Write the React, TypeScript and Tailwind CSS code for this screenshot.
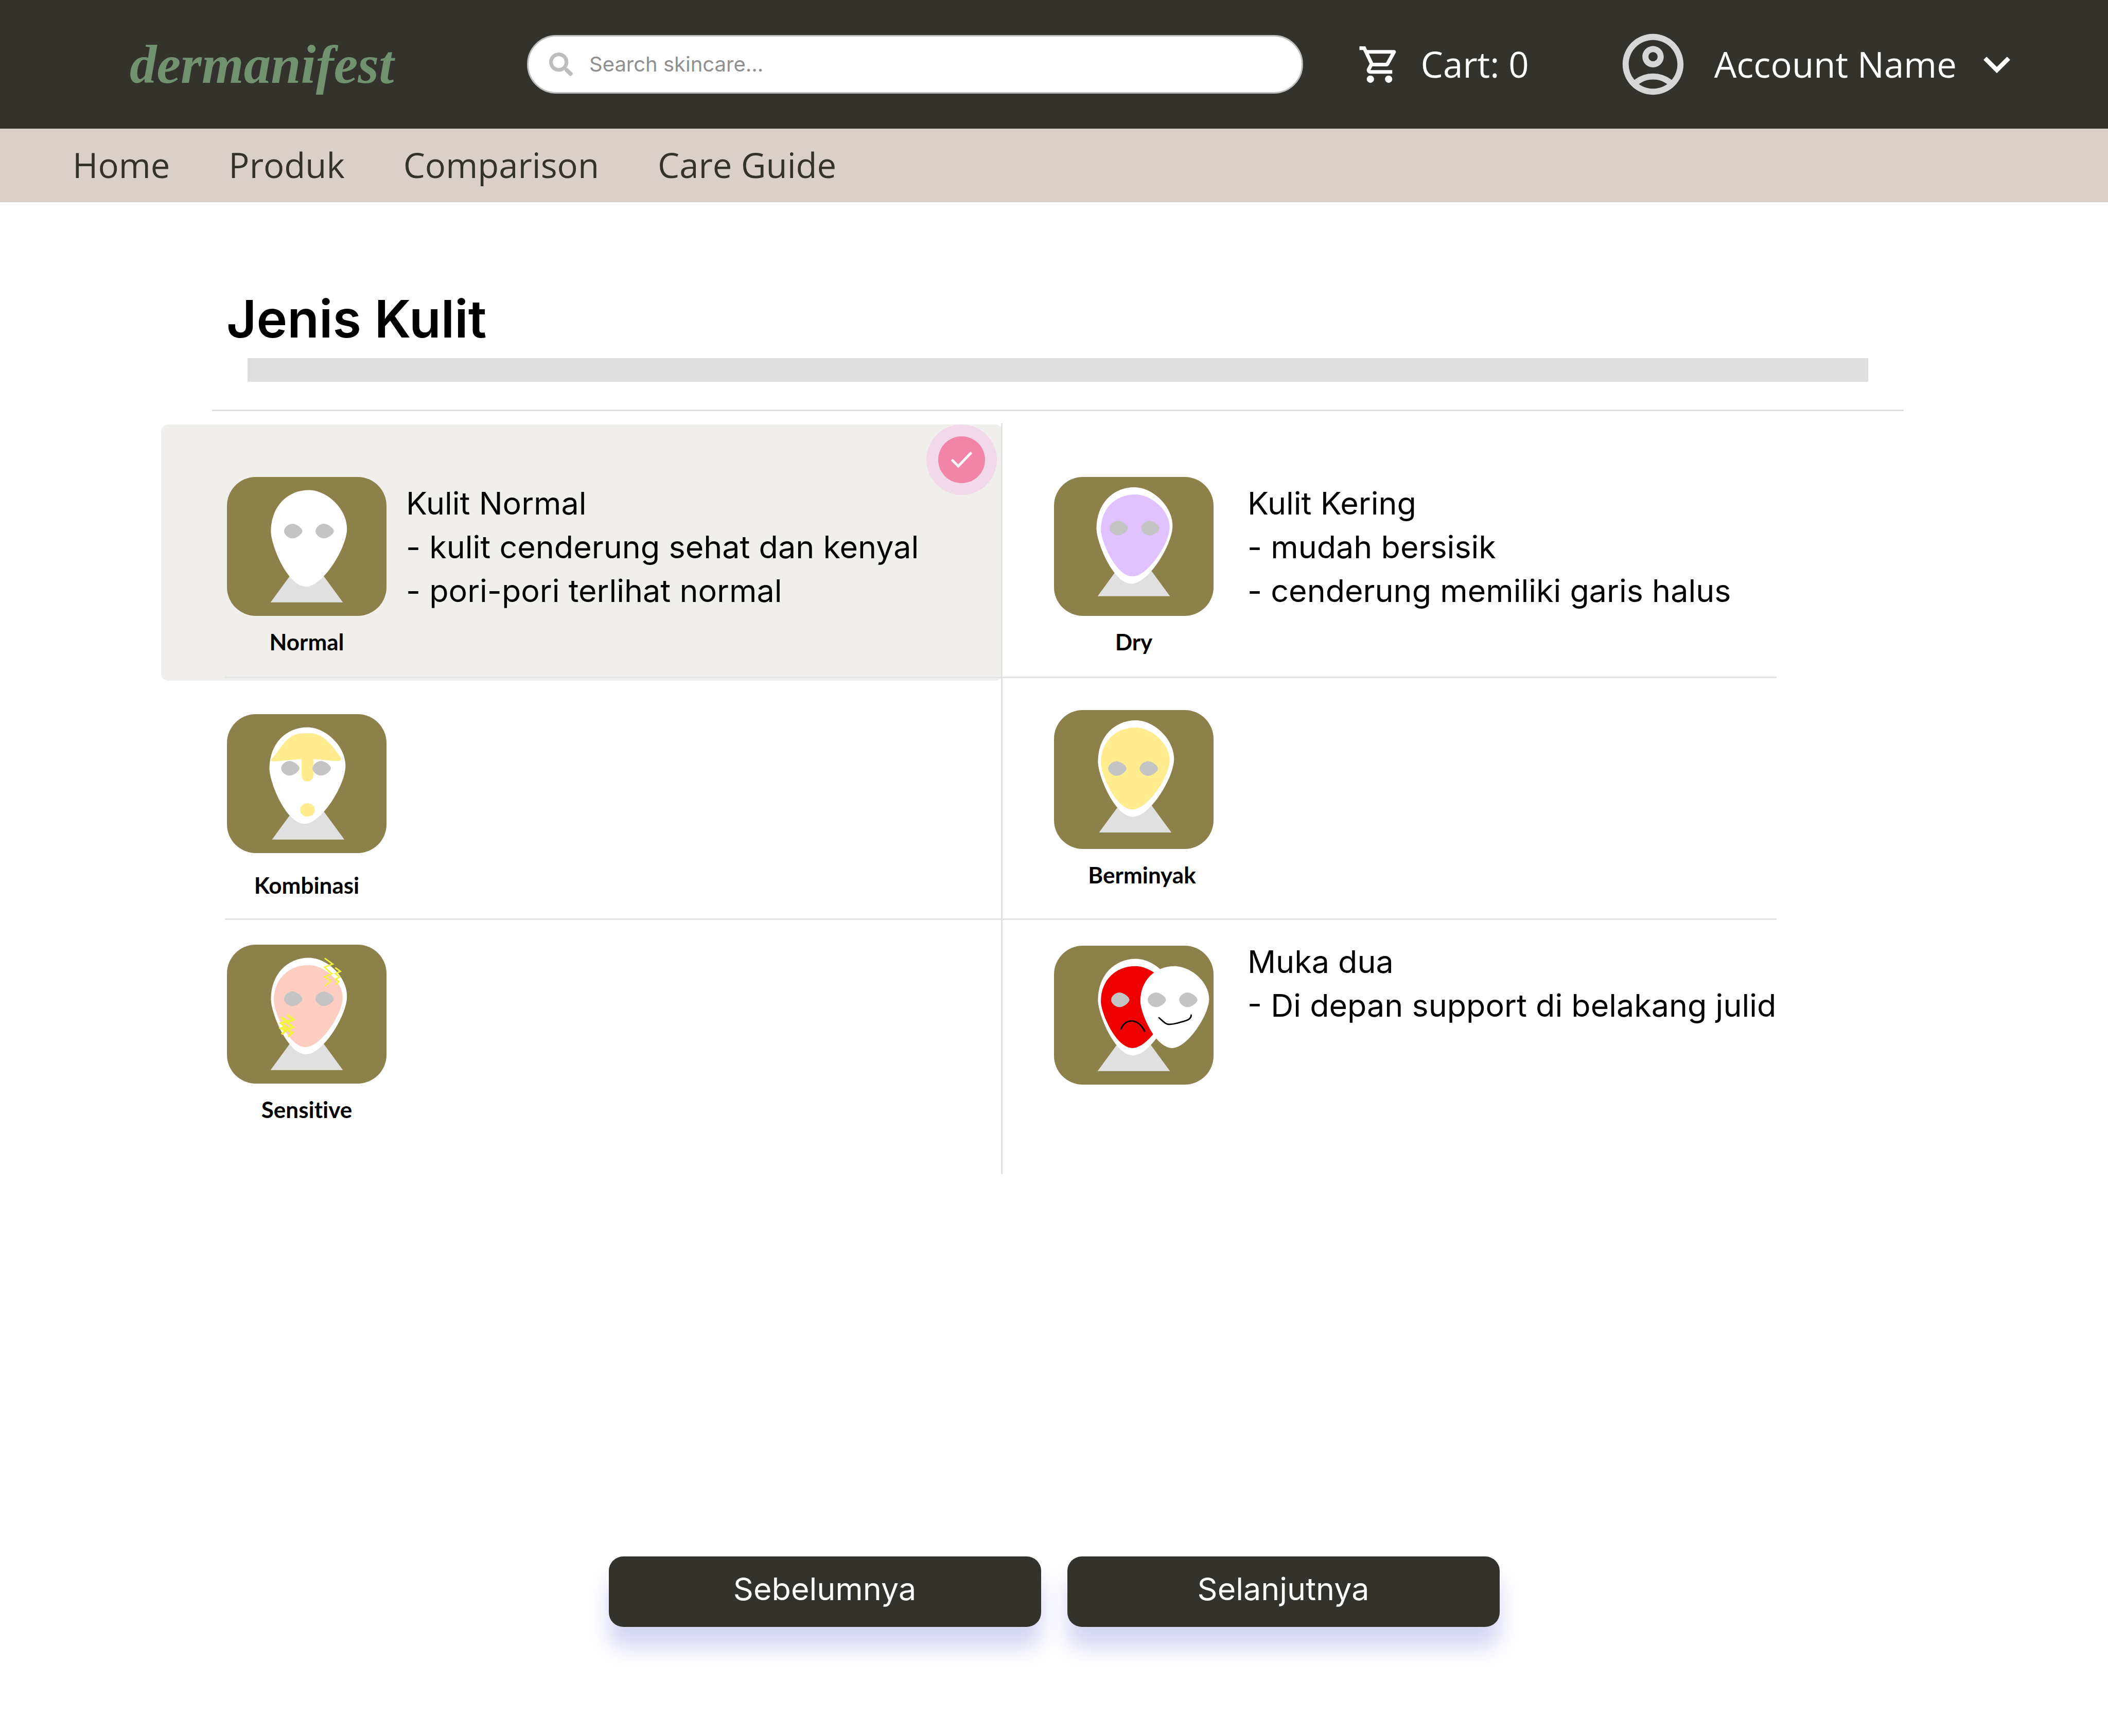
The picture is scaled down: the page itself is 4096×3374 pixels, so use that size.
import { useState, type ReactNode } from "react";
import {
  MdExpandMore,
  MdOutlineAccountCircle,
  MdOutlineShoppingCart,
} from "react-icons/md";
import { FaSearch } from "react-icons/fa";

const HEAD =
  "M104 0C152 0 208 50 208 106C208 157 142 264 96 264C45 264 0 150 0 113C0 45 45 0 104 0Z";
const EYE =
  "M23 0C34 0 50 12 50 20C50 28 34 40 23 40C12 40 0 30 0 20C0 10 12 0 23 0Z";

function Head({ x, y }: { x: number; y: number }) {
  return <path d={HEAD} fill="#fff" transform={`translate(${x} ${y})`} />;
}

function Mask({ x, y, fill }: { x: number; y: number; fill: string }) {
  return (
    <path
      d={HEAD}
      fill={fill}
      transform={`translate(${x} ${y}) scale(0.904 0.8485)`}
    />
  );
}

function Eyes({ x, y }: { x: number; y: number }) {
  return (
    <g fill="#c4c4c4">
      <path d={EYE} transform={`translate(${x} ${y})`} />
      <path d={EYE} transform={`translate(${x + 86} ${y})`} />
    </g>
  );
}

function Neck({ x, y }: { x: number; y: number }) {
  return (
    <path d="M0 135L99 0L198 135Z" fill="#e0e0e0" transform={`translate(${x} ${y})`} />
  );
}

function Tile({ children }: { children: ReactNode }) {
  return (
    <svg
      viewBox="0 0 436 380"
      className="h-[270px] w-[310px] shrink-0 rounded-[56px] bg-[#8c814a]"
      aria-hidden="true"
    >
      {children}
    </svg>
  );
}

type Option = {
  id: string;
  label: string;
  lines: string[];
  face: ReactNode;
  cell: string;
  figure: string;
  caption: string;
  text: string;
};

const OPTIONS: Option[] = [
  {
    id: "normal",
    label: "Normal",
    lines: ["Kulit Normal", "- kulit cenderung sehat dan kenyal", "- pori-pori terlihat normal"],
    cell: "border-r-3 border-b-3 pl-1 gap-[38px]",
    figure: "pt-[104px] pb-[42px] gap-6",
    caption: "",
    text: "pt-[113px]",
    face: (
      <>
        <Neck x={119} y={208} />
        <Head x={120} y={36} />
        <Eyes x={156} y={128} />
      </>
    ),
  },
  {
    id: "dry",
    label: "Dry",
    lines: ["Kulit Kering", "- mudah bersisik", "- cenderung memiliki garis halus"],
    cell: "border-b-3 pl-[100px] gap-[66px]",
    figure: "pt-[104px] pb-[42px] gap-6",
    caption: "",
    text: "pt-[113px]",
    face: (
      <>
        <Neck x={119} y={191} />
        <Head x={116} y={28} />
        <Mask x={128} y={48} fill="#dfc2ff" />
        <Eyes x={152} y={120} />
      </>
    ),
  },
  {
    id: "kombinasi",
    label: "Kombinasi",
    lines: [],
    cell: "border-r-3 border-b-3 pl-1",
    figure: "pt-[70px] pb-[39px] gap-9",
    caption: "",
    text: "",
    face: (
      <>
        <Neck x={123} y={208} />
        <Head x={116} y={36} />
        <path
          fill="#ffec8f"
          d="M122 122C140 104 155 72 178 60C194 51 210 52 220 52C236 52 250 54 263 64C282 77 296 98 311 118C314 124 311 128 304 128C286 129 256 123 236 123V168A16 16 0 0 1 204 168V123C184 123 140 130 125 129C120 128 118 126 122 122Z"
        />
        <ellipse cx="220" cy="262" rx="20" ry="18" fill="#ffec8f" />
        <Eyes x={148} y={128} />
      </>
    ),
  },
  {
    id: "berminyak",
    label: "Berminyak",
    lines: [],
    cell: "border-b-3 pl-[100px]",
    figure: "pt-[62px] gap-6",
    caption: "pl-8",
    text: "",
    face: (
      <>
        <Neck x={123} y={200} />
        <Head x={120} y={28} />
        <Mask x={128} y={48} fill="#ffec8f" />
        <Eyes x={148} y={140} />
      </>
    ),
  },
  {
    id: "sensitive",
    label: "Sensitive",
    lines: [],
    cell: "border-r-3 pl-1",
    figure: "pt-12 pb-[100px] gap-6",
    caption: "",
    text: "",
    face: (
      <>
        <Neck x={119} y={208} />
        <Head x={120} y={36} />
        <Mask x={128} y={56} fill="#fccdc0" />
        <Eyes x={156} y={128} />
        <g fill="none" stroke="#f3f33b">
          <path strokeWidth="4" d="M267 37L289 53L267 62L287 80L267 88L284 99L268 113" />
          <path strokeWidth="4" d="M296 63L310 73L296 79L308 89L297 94L306 101L297 109" />
          <path strokeWidth="6" d="M165 192L182 205L163 212L181 226L164 232L179 241L167 252" />
          <path strokeWidth="6" d="M148 199L163 209L148 215L162 225L148 229L160 236L149 245" />
        </g>
      </>
    ),
  },
  {
    id: "muka-dua",
    label: "",
    lines: ["Muka dua", "- Di depan support di belakang julid"],
    cell: "pl-[100px] gap-[66px]",
    figure: "pt-[50px]",
    caption: "",
    text: "pt-[39px]",
    face: (
      <>
        <Neck x={119} y={208} />
        <Head x={120} y={36} />
        <Mask x={128} y={56} fill="#ef0000" />
        <Eyes x={156} y={128} />
        <Mask x={236} y={56} fill="#fff" />
        <Eyes x={256} y={128} />
        <g fill="none" stroke="#000" strokeWidth="4" strokeLinecap="round">
          <path d="M183 228C188 216 197 206 212 206C226 206 238 215 248 234" />
          <path d="M287 197C294 203 304 215 312 215C324 216 337 212 347 209C358 206 375 203 375 190" />
        </g>
      </>
    ),
  },
];

const NAV = ["Home", "Produk", "Comparison", "Care Guide"];

function CheckBadge() {
  return (
    <span className="absolute top-0.5 right-2 grid size-[137px] place-items-center rounded-full bg-[#f1d9ea]">
      <span className="grid size-[91px] place-items-center rounded-full bg-[#f284a7]">
        <svg
          viewBox="0 0 41 32"
          className="h-8 w-[41px]"
          fill="none"
          stroke="#fff"
          strokeWidth="5"
          strokeLinecap="round"
          aria-hidden="true"
        >
          <path d="M3 17L14 28L38 3" />
        </svg>
      </span>
    </span>
  );
}

function Choice({
  option,
  selected,
  onSelect,
}: {
  option: Option;
  selected: boolean;
  onSelect: () => void;
}) {
  return (
    <label
      className={`relative flex cursor-pointer items-start border-[#e2e1e4] ${option.cell}`}
    >
      <input
        type="radio"
        name="jenis-kulit"
        value={option.id}
        checked={selected}
        onChange={onSelect}
        aria-label={option.label || option.lines[0]}
        className="sr-only"
      />
      {selected && (
        <>
          <span className="absolute top-0.5 right-[-3px] bottom-[-8px] left-[-124px] -z-10 rounded-[14px] bg-[#f0efeb]" />
          <CheckBadge />
        </>
      )}
      <span className={`flex flex-col items-center ${option.figure}`}>
        <Tile>{option.face}</Tile>
        {option.label && (
          <span
            className={`font-['Lato',sans-serif] text-[44px] leading-[52px] font-bold [font-variant-ligatures:none] ${option.caption}`}
          >
            {option.label}
          </span>
        )}
      </span>
      {option.lines.length > 0 && (
        <span
          className={`flex flex-col text-[61px] leading-[85px] whitespace-nowrap ${option.text}`}
        >
          {option.lines.map((line) => (
            <span key={line}>{line}</span>
          ))}
        </span>
      )}
    </label>
  );
}

export default function App() {
  const [selected, setSelected] = useState("normal");

  return (
    <div className="flex min-h-screen flex-col bg-white font-['Inter',sans-serif] text-black">
      <header className="flex h-[250px] items-center bg-[#34322d] pr-[164px] pl-[252px] font-['Open_Sans',sans-serif] text-[69px] font-medium text-white">
        <a
          href="#"
          className="w-[772px] shrink-0 font-['Liberation_Serif',serif] text-[105px] leading-none font-bold text-[#70926f] italic"
        >
          dermanifest
        </a>
        <form
          role="search"
          className="flex h-[114px] flex-1 items-center gap-8 rounded-full border-3 border-[#bdbdbd] bg-white pr-12 pl-10"
        >
          <FaSearch className="size-[46px] shrink-0 text-[#bdbdbd]" />
          <input
            type="search"
            aria-label="Search skincare"
            placeholder="Search skincare..."
            className="min-w-0 flex-1 bg-transparent font-['Inter',sans-serif] text-[40px] font-normal text-black outline-none placeholder:text-[#8f8f8f]"
          />
        </form>
        <a href="#" className="ml-[106px] flex shrink-0 items-center gap-[38px]">
          <MdOutlineShoppingCart className="size-[85px]" />
          Cart: 0
        </a>
        <button type="button" className="ml-[170px] flex shrink-0 cursor-pointer items-center">
          <MdOutlineAccountCircle className="size-[142px] text-[#d6d6d6]" />
          <span className="ml-12">Account Name</span>
          <MdExpandMore className="ml-[26px] size-[104px]" />
        </button>
      </header>

      <nav className="flex h-[143px] items-center gap-[114px] bg-[#d9d0ca] px-[141px] pb-0.5 font-['Open_Sans',sans-serif] text-[67px] text-[#34322d]">
        {NAV.map((item) => (
          <a key={item} href="#">
            {item}
          </a>
        ))}
      </nav>

      <main className="flex flex-1 flex-col pt-[166px] pb-[212px]">
        <h1 className="px-[440px] text-[101px] leading-[120px] font-semibold">Jenis Kulit</h1>
        <div className="mt-[17px] mr-[466px] ml-[481px] h-[46px] bg-[#dedede]" />
        <hr className="mt-[54px] mr-[397px] ml-[412px] border-t-3 border-[#dedede]" />

        <fieldset
          aria-label="Jenis Kulit"
          className="isolate mt-6 mr-[644px] ml-[437px] grid grid-cols-[1511fr_1504fr]"
        >
          {OPTIONS.map((option) => (
            <Choice
              key={option.id}
              option={option}
              selected={selected === option.id}
              onSelect={() => setSelected(option.id)}
            />
          ))}
        </fieldset>

        <div className="mt-auto flex justify-center gap-[51px]">
          {["Sebelumnya", "Selanjutnya"].map((action) => (
            <button
              key={action}
              type="button"
              className="w-[840px] cursor-pointer rounded-[28px] bg-[#34322d] pt-[21px] pb-[31px] text-[61px] leading-[85px] text-white shadow-[0_40px_40px_#d4d5f4]"
            >
              {action}
            </button>
          ))}
        </div>
      </main>
    </div>
  );
}
